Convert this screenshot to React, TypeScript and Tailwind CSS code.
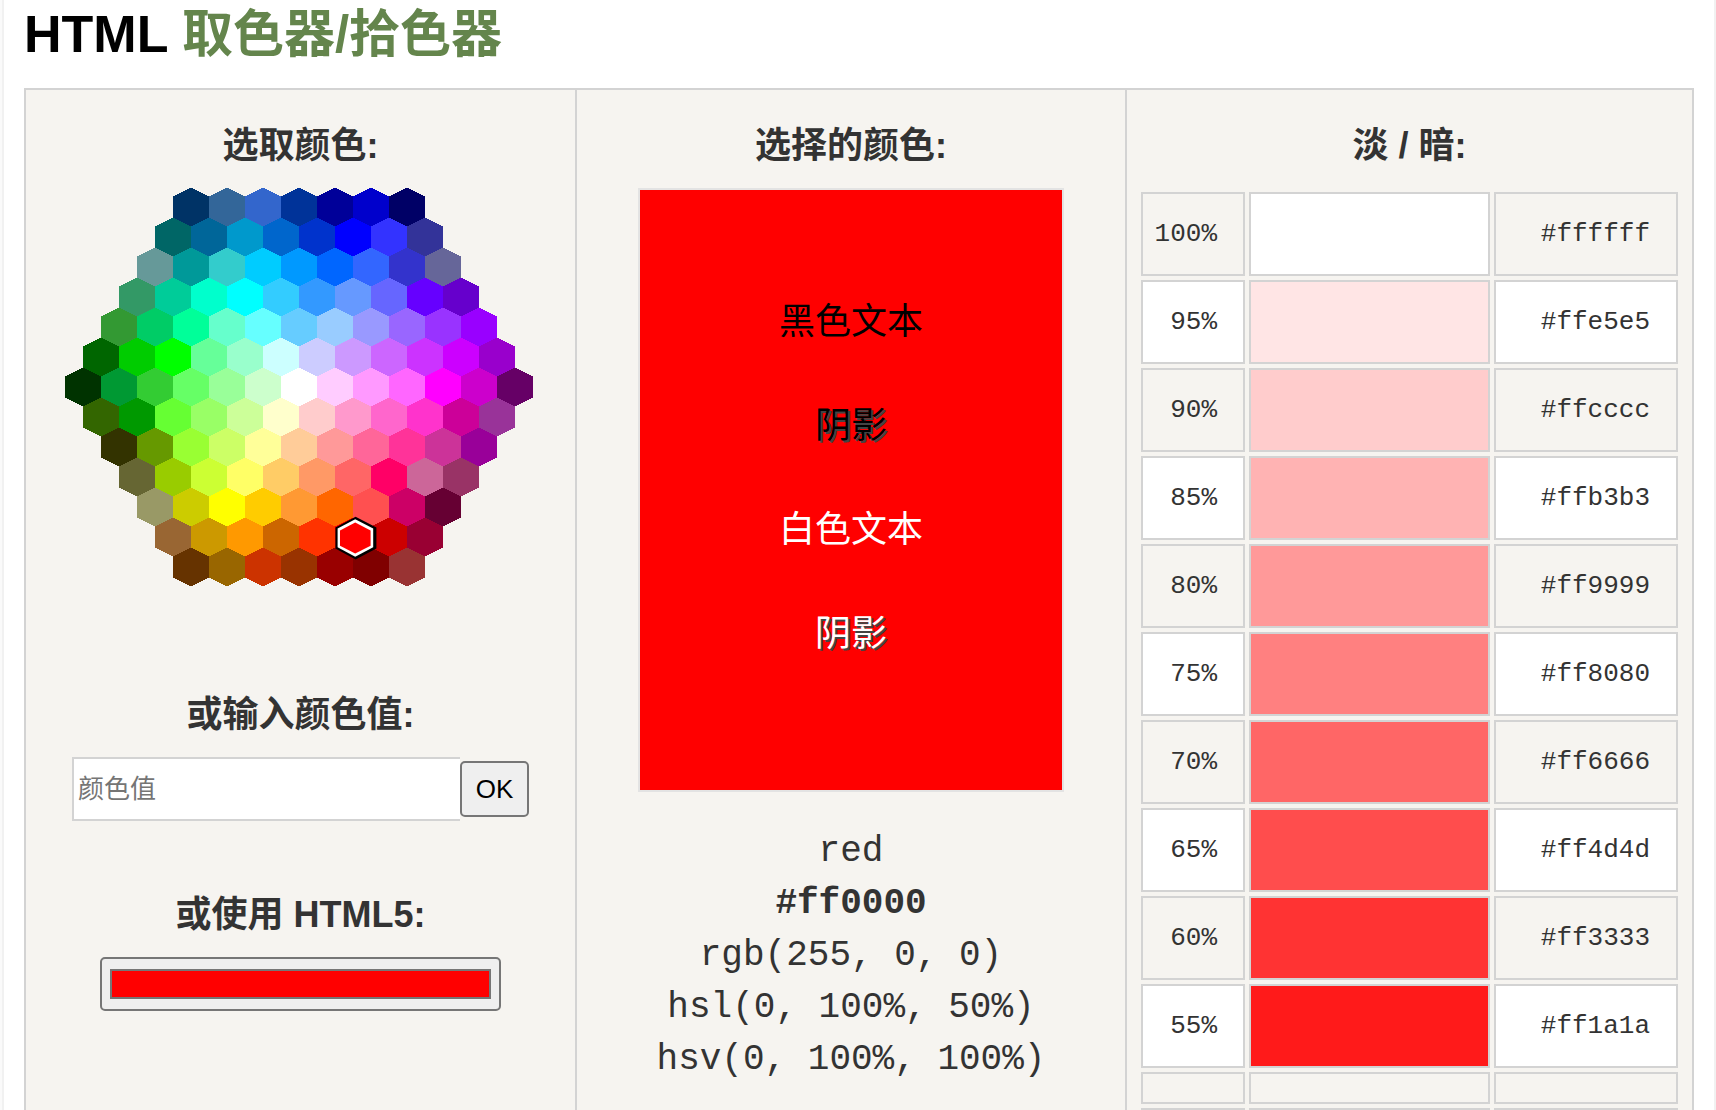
import { useState } from "react";

const HEX_ROWS: string[][] = [
  ["003366", "336699", "3366cc", "003399", "000099", "0000cc", "000066"],
  ["006666", "006699", "0099cc", "0066cc", "0033cc", "0000ff", "3333ff", "333399"],
  ["669999", "009999", "33cccc", "00ccff", "0099ff", "0066ff", "3366ff", "3333cc", "666699"],
  ["339966", "00cc99", "00ffcc", "00ffff", "33ccff", "3399ff", "6699ff", "6666ff", "6600ff", "6600cc"],
  ["339933", "00cc66", "00ff99", "66ffcc", "66ffff", "66ccff", "99ccff", "9999ff", "9966ff", "9933ff", "9900ff"],
  ["006600", "00cc00", "00ff00", "66ff99", "99ffcc", "ccffff", "ccccff", "cc99ff", "cc66ff", "cc33ff", "cc00ff", "9900cc"],
  ["003300", "009933", "33cc33", "66ff66", "99ff99", "ccffcc", "ffffff", "ffccff", "ff99ff", "ff66ff", "ff00ff", "cc00cc", "660066"],
  ["336600", "009900", "66ff33", "99ff66", "ccff99", "ffffcc", "ffcccc", "ff99cc", "ff66cc", "ff33cc", "cc0099", "993399"],
  ["333300", "669900", "99ff33", "ccff66", "ffff99", "ffcc99", "ff9999", "ff6699", "ff3399", "cc3399", "990099"],
  ["666633", "99cc00", "ccff33", "ffff66", "ffcc66", "ff9966", "ff6666", "ff0066", "cc6699", "993366"],
  ["999966", "cccc00", "ffff00", "ffcc00", "ff9933", "ff6600", "ff5050", "cc0066", "660033"],
  ["996633", "cc9900", "ff9900", "cc6600", "ff3300", "ff0000", "cc0000", "990033"],
  ["663300", "996600", "cc3300", "993300", "990000", "800000", "993333"],
];

const SHADES: [string, string][] = [
  ["100%", "#ffffff"],
  ["95%", "#ffe5e5"],
  ["90%", "#ffcccc"],
  ["85%", "#ffb3b3"],
  ["80%", "#ff9999"],
  ["75%", "#ff8080"],
  ["70%", "#ff6666"],
  ["65%", "#ff4d4d"],
  ["60%", "#ff3333"],
  ["55%", "#ff1a1a"],
];

function HexMap() {
  return (
    <svg viewBox="0 0 234 199" className="mr-1 block w-[468px] max-w-full" role="img" aria-label="颜色">
      <g shapeRendering="crispEdges">
        {HEX_ROWS.map((row, r) =>
          row.map((hex, i) => {
            const x = 117 - row.length * 9 + i * 18;
            const y = r * 15;
            return (
              <polygon
                key={hex}
                fill={`#${hex}`}
                points={`${x + 9},${y - 0.3} ${x + 18},${y + 4.2} ${x + 18},${y + 14.7} ${x + 9},${y + 19.2} ${x},${y + 14.7} ${x},${y + 4.2}`}
              />
            );
          }),
        )}
      </g>
      <polygon fill="#000" points="145.3,164.4 155.7,169.8 155.7,180.2 145.3,185.7 135.2,180.2 135.2,169.8" />
      <polygon fill="#fff" points="145.1,165.6 154.1,170.2 154.1,179.6 145.1,184.4 136.3,179.6 136.3,170.2" />
      <polygon fill="#f00" points="145.1,167.3 152.8,171.2 152.8,178.9 145.1,182.8 137.5,178.9 137.5,171.2" />
    </svg>
  );
}

function PanelTitle({ children }: { children: React.ReactNode }) {
  return <h3 className="mb-4 text-center text-[36px] leading-[52px] font-bold">{children}</h3>;
}

export default function App() {
  const [value, setValue] = useState("");
  const [picked, setPicked] = useState("#ff0000");
  const cell = "border-2 border-[#d3d3d3]";

  return (
    <div className="h-screen overflow-hidden bg-[#fafafa] pl-[2px] font-['Liberation_Sans','Noto_Sans_CJK_SC',sans-serif] text-[#333]">
      <main className="flex h-full flex-col border-x-2 border-[#f1f1f1] bg-white px-5">
        <h1 className="mb-[19px] shrink-0 text-[52px] leading-[68px] font-bold text-black">
          HTML <span className="text-[51px] text-[#64854c]">取色器/拾色器</span>
        </h1>

        <div className="grid grid-cols-[551fr_550fr_565fr] border-2 border-[#d3d3d3] bg-[#f6f4f0]">
          <section className="flex flex-col items-center border-r-2 border-[#d3d3d3] pt-[30px]">
            <PanelTitle>选取颜色:</PanelTitle>
            <HexMap />

            <div className="mt-[103px]">
              <PanelTitle>
                <label htmlFor="color-value">或输入颜色值:</label>
              </PanelTitle>
            </div>
            <form className="flex items-center" onSubmit={(e) => e.preventDefault()}>
              <input
                id="color-value"
                type="text"
                value={value}
                onChange={(e) => setValue(e.target.value)}
                placeholder="颜色值"
                className="h-16 w-[388px] border-2 border-r-0 border-[#d3d3d3] bg-white px-1 text-[26px] placeholder:text-[#757575]"
              />
              <button
                type="submit"
                className="h-14 w-[69px] rounded-[5px] border-2 border-[#767676] bg-[#efefef] text-[26px] text-black"
              >
                OK
              </button>
            </form>

            <div className="mt-[68px]">
              <PanelTitle>
                <label htmlFor="color-picker">或使用 HTML5:</label>
              </PanelTitle>
            </div>
            <input
              id="color-picker"
              type="color"
              value={picked}
              onChange={(e) => setPicked(e.target.value)}
              className="h-[54px] w-[401px] rounded-[5px] border-2 border-[#767676] bg-[#efefef] px-2 py-[10px] [&::-webkit-color-swatch]:rounded-none [&::-webkit-color-swatch]:border-2 [&::-webkit-color-swatch]:border-[#767676] [&::-webkit-color-swatch-wrapper]:p-0"
            />
          </section>

          <section className="flex flex-col items-center border-r-2 border-[#d3d3d3] pt-[30px]">
            <PanelTitle>选择的颜色:</PanelTitle>
            <div className="flex h-[604px] w-[426px] flex-col items-center gap-[52px] border-2 border-[#e3e3e3] bg-[#ff0000] pt-[106px] text-[36px] leading-[52px]">
              <span className="text-black">黑色文本</span>
              <span className="text-black [text-shadow:2px_2px_0_#444]">阴影</span>
              <span className="text-white">白色文本</span>
              <span className="text-white [text-shadow:2px_2px_0_#444]">阴影</span>
            </div>
            <div className="mt-[34px] text-center font-['Liberation_Mono',monospace] text-[36px] leading-[52px]">
              <div>red</div>
              <div className="font-bold">#ff0000</div>
              <div>rgb(255, 0, 0)</div>
              <div>hsl(0, 100%, 50%)</div>
              <div>hsv(0, 100%, 100%)</div>
            </div>
          </section>

          <section className="px-[10px] pt-[30px]">
            <PanelTitle>淡 / 暗:</PanelTitle>
            <table className="w-full table-fixed border-separate border-spacing-1 font-['Liberation_Mono',monospace] text-[26px]">
              <colgroup>
                <col className="w-[104px]" />
                <col />
                <col className="w-[184px]" />
              </colgroup>
              <tbody>
                {SHADES.map(([pct, hex], i) => (
                  <tr key={hex} className={i % 2 ? "h-[84px] bg-white" : "h-[84px]"}>
                    <td className={`${cell} pr-[26px] text-right`}>{pct}</td>
                    <td className={cell} style={{ backgroundColor: hex }} />
                    <td className={`${cell} pr-[26px] text-right`}>{hex}</td>
                  </tr>
                ))}
                <tr className="h-8">
                  <td className={cell} />
                  <td className={cell} />
                  <td className={cell} />
                </tr>
                <tr className="h-8">
                  <td className={cell} />
                  <td className={cell} />
                  <td className={cell} />
                </tr>
              </tbody>
            </table>
          </section>
        </div>
      </main>
    </div>
  );
}
